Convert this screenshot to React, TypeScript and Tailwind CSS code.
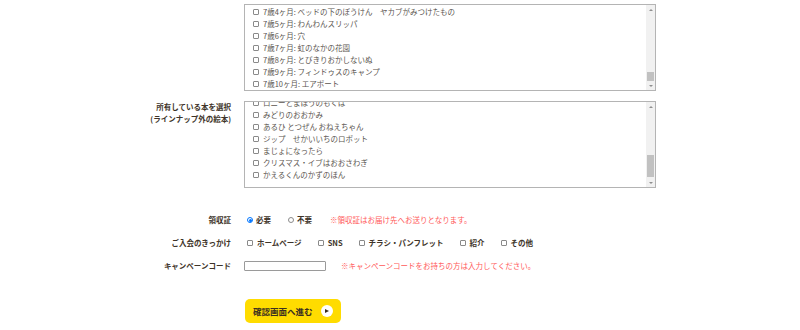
import React from 'react';

const ownedList1 = [
  '7歳4ヶ月: ベッドの下のぼうけん　ヤカブがみつけたもの',
  '7歳5ヶ月: わんわんスリッパ',
  '7歳6ヶ月: 穴',
  '7歳7ヶ月: 虹のなかの花園',
  '7歳8ヶ月: とびきりおかしないぬ',
  '7歳9ヶ月: フィンドゥスのキャンプ',
  '7歳10ヶ月: エアポート',
];

const ownedList2 = [
  'ロニーとまほうのもくば',
  'みどりのおおかみ',
  'あるひ とつぜん おねえちゃん',
  'ジップ　せかいいちのロボット',
  'まじょになったら',
  'クリスマス・イブはおおさわぎ',
  'かえるくんのかずのほん',
];

const triggers = ['ホームページ', 'SNS', 'チラシ・パンフレット', '紹介', 'その他'];

const Box = () => <span className="w-[6px] h-[6px] shrink-0 border border-[#8a8a8a] rounded-[1px] bg-white" />;

const ScrollBar = ({ thumb, bottom }: { thumb: string; bottom: string }) => (
  <div className="w-[9px] shrink-0 bg-[#f1f1f1] flex flex-col">
    <div className="h-[9px] flex items-center justify-center">
      <span className="w-0 h-0 border-l-[2px] border-r-[2px] border-b-[2px] border-transparent border-b-[#8f8f8f]" />
    </div>
    <div className="flex-1 flex flex-col justify-end">
      <div className={`${thumb} mx-[1px] bg-[#c1c1c1]`} />
      <div className={bottom} />
    </div>
    <div className="h-[9px] flex items-center justify-center">
      <span className="w-0 h-0 border-l-[2px] border-r-[2px] border-t-[2px] border-transparent border-t-[#8f8f8f]" />
    </div>
  </div>
);

const CheckList = ({ items, offset, thumb, bottom }: { items: string[]; offset: string; thumb: string; bottom: string }) => (
  <div className="w-[412px] h-[87px] border border-[#b4b4b4] bg-white flex overflow-hidden">
    <div className={`flex-1 flex flex-col pl-[8px] ${offset}`}>
      {items.map((t) => (
        <div key={t} className="h-[12px] flex items-center gap-[4px] text-[7.5px] text-[#5b5550] whitespace-nowrap">
          <Box />
          <span>{t}</span>
        </div>
      ))}
    </div>
    <ScrollBar thumb={thumb} bottom={bottom} />
  </div>
);

const Row = ({ label, children, top }: { label?: React.ReactNode; children: React.ReactNode; top?: boolean }) => (
  <div className={`flex gap-[13px] ${top ? 'items-start' : 'items-center'}`}>
    <div className="w-[87px] shrink-0 text-right font-bold text-[7.5px] leading-[12px] text-[#3e3429] whitespace-nowrap">{label}</div>
    <div className="flex-1 flex items-center">{children}</div>
  </div>
);

export default function App() {
  return (
    <div className="w-[800px] h-[330px] bg-white overflow-hidden" style={{ fontFamily: '"Noto Sans CJK JP", "Noto Sans", sans-serif' }}>
      <div className="w-[512px] mx-auto flex flex-col">
        <div className="mt-[4px]">
          <Row top>
            <CheckList items={ownedList1} offset="pt-[1px]" thumb="h-[9px]" bottom="h-[0px]" />
          </Row>
        </div>

        <div className="mt-[10px]">
          <Row top label={<>所有している本を選択<br />(ラインナップ外の絵本)</>}>
            <CheckList items={ownedList2} offset="-mt-[5px]" thumb="h-[22px]" bottom="h-[1px]" />
          </Row>
        </div>

        <div className="mt-[26px]">
          <Row label="領収証">
            <div className="flex items-center h-[12px] text-[7.5px] font-bold text-[#3e3429] pl-[3px]">
              <span className="w-[6px] h-[6px] rounded-full border border-[#0075ff] flex items-center justify-center">
                <span className="w-[3px] h-[3px] rounded-full bg-[#0075ff]" />
              </span>
              <span className="ml-[3px]">必要</span>
              <span className="ml-[17px] w-[6px] h-[6px] rounded-full border border-[#8a8a8a] bg-white" />
              <span className="ml-[3px]">不要</span>
              <span className="ml-[18px] font-normal text-[#ff5a5a]">※領収証はお届け先へお送りとなります。</span>
            </div>
          </Row>
        </div>

        <div className="mt-[11px]">
          <Row label="ご入会のきっかけ">
            <div className="flex items-center h-[12px] text-[7.5px] font-bold text-[#3e3429] pl-[3px] gap-[16px]">
              {triggers.map((t) => (
                <div key={t} className="flex items-center gap-[4px]">
                  <Box />
                  <span>{t}</span>
                </div>
              ))}
            </div>
          </Row>
        </div>

        <div className="mt-[11px]">
          <Row label="キャンペーンコード">
            <div className="flex items-center h-[12px]">
              <input className="w-[82px] h-[10px] border border-[#9a9a9a] rounded-[1px] bg-white outline-none" />
              <span className="ml-[15px] text-[7.5px] text-[#ff5a5a] whitespace-nowrap">※キャンペーンコードをお持ちの方は入力してください。</span>
            </div>
          </Row>
        </div>

        <div className="mt-[27px]">
          <Row>
            <button className="ml-[1px] w-[96px] h-[24px] rounded-[5px] bg-[#ffdc00] flex items-center pl-[8px]">
              <span className="text-[8.5px] font-bold text-[#3b2f20] whitespace-nowrap">確認画面へ進む</span>
              <span className="ml-[8px] w-[12px] h-[12px] rounded-full bg-white flex items-center justify-center">
                <span className="ml-[1px] w-0 h-0 border-l-[4px] border-y-[2.5px] border-transparent border-l-[#3b2f20]" />
              </span>
            </button>
          </Row>
        </div>
      </div>
    </div>
  );
}
